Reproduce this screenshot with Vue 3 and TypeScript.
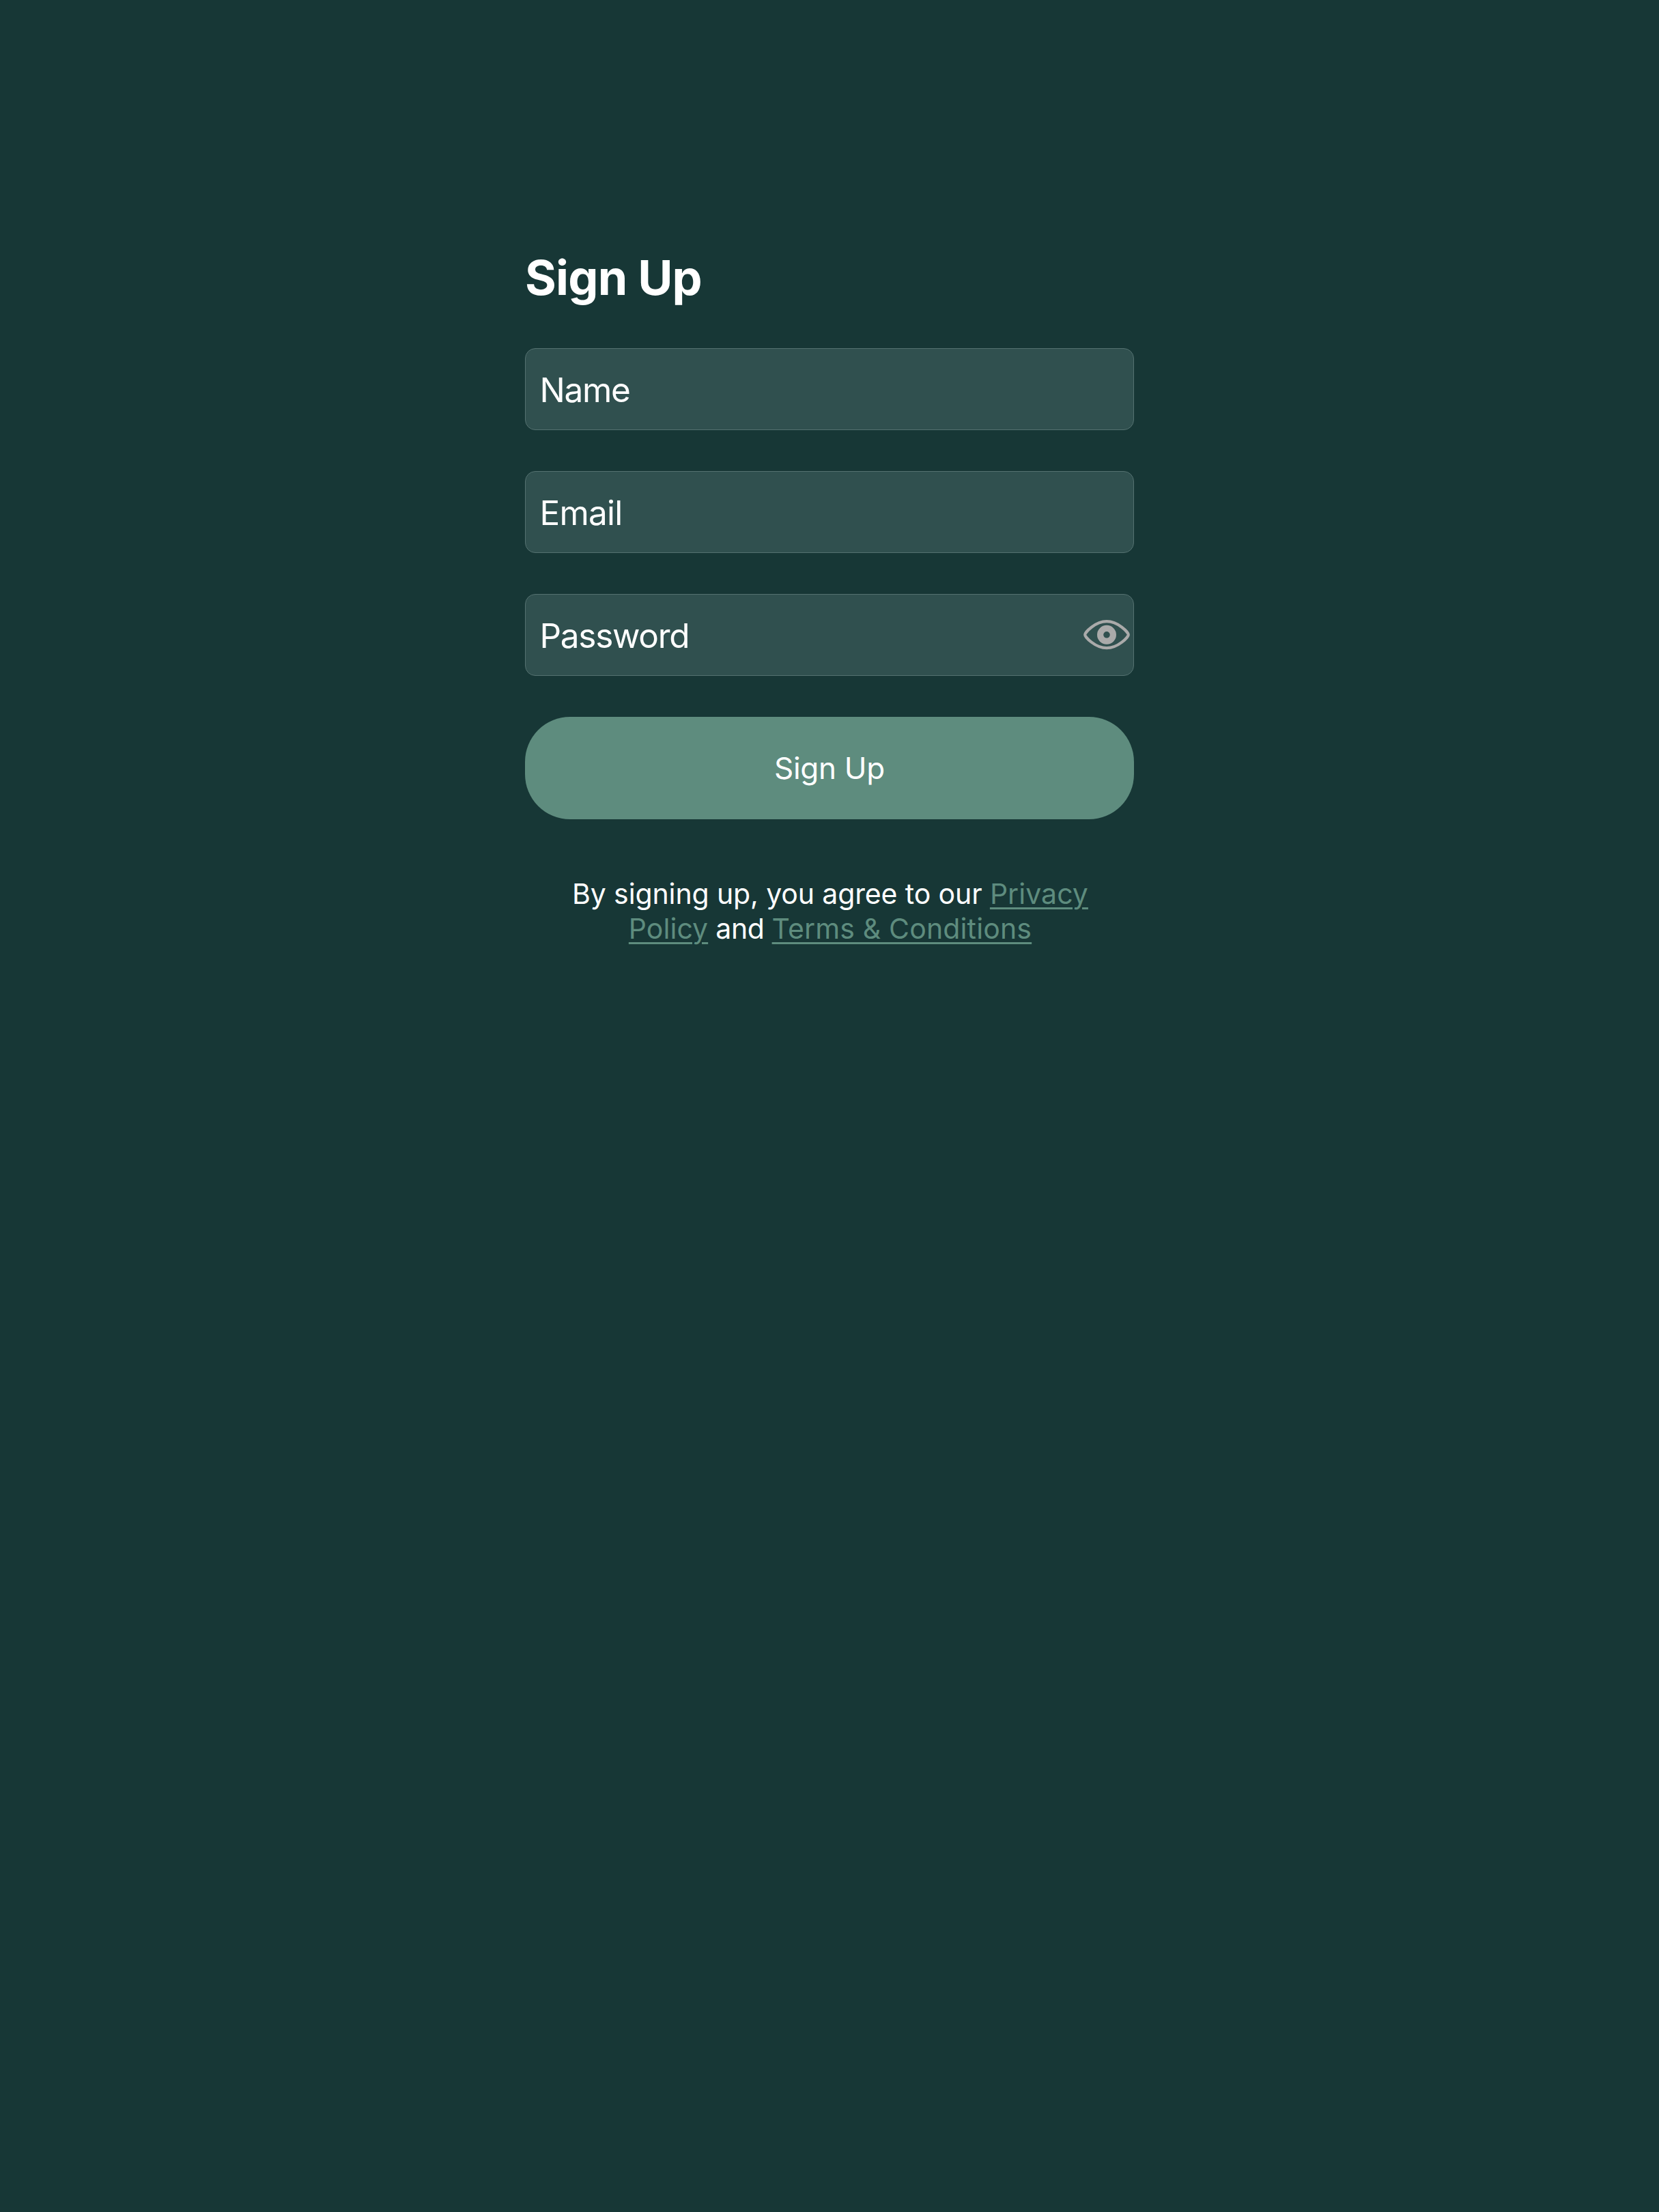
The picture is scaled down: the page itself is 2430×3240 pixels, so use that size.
<script setup lang="ts">
interface Field {
  key: string
  label: string
  reveal?: boolean
}

const fields: Field[] = [
  { key: 'name', label: 'Name' },
  { key: 'email', label: 'Email' },
  { key: 'password', label: 'Password', reveal: true },
]
</script>

<template>
  <main class="page">
    <form class="form" @submit.prevent>
      <h1 class="title">Sign Up</h1>
      <div v-for="field in fields" :key="field.key" class="field">
        <span class="label" :class="field.key">{{ field.label }}</span>
        <svg v-if="field.reveal" class="eye" viewBox="0 0 68 44" aria-hidden="true">
          <path
            d="M2.2 21.7C2.2 18.5 17 2.2 34 2.2S65.8 18.5 65.8 21.7S51 41.2 34 41.2S2.2 25 2.2 21.7Z"
            fill="none"
            stroke="currentColor"
            stroke-width="4.2"
            stroke-linejoin="round"
          />
          <circle cx="34" cy="21.8" r="9.4" fill="none" stroke="currentColor" stroke-width="9.2" />
        </svg>
      </div>
      <button class="submit" type="submit">Sign Up</button>
      <p class="terms">
        By signing up, you agree to our <a class="privacy">Privacy Policy</a><span class="and"> and </span><a class="conditions">Terms &amp; Conditions</a>
      </p>
    </form>
  </main>
</template>

<style>
body {
  margin: 0;
  background: #173736;
}
</style>

<style scoped>
.page {
  min-height: 3240px;
  box-sizing: border-box;
  padding-top: 364px;
  padding-left: 769px;
  background: #173736;
  color: #fff;
  font-family: Inter, 'Liberation Sans', sans-serif;
}

.form {
  width: 892px;
}

.title {
  margin: 0 0 61px;
  font-size: 70px;
  font-weight: 700;
  line-height: 85px;
  letter-spacing: -0.8px;
}

.field {
  display: flex;
  align-items: center;
  justify-content: space-between;
  box-sizing: border-box;
  height: 120px;
  margin-bottom: 60px;
  padding: 0 5px 0 20.5px;
  border: 1px solid #547170;
  border-radius: 15px;
  background: #30504f;
}

.label {
  padding-top: 2px;
  font-size: 49.5px;
  line-height: 60px;
}

.name {
  letter-spacing: -1.3px;
}

.email {
  letter-spacing: -0.8px;
}

.password {
  letter-spacing: -1.3px;
}

.eye {
  width: 68px;
  height: 44px;
  color: #aaa;
}

.submit {
  display: block;
  width: 100%;
  height: 150px;
  padding: 0;
  border: 0;
  border-radius: 66px;
  background: #5e8c7e;
  color: #fff;
  font: 400 44px/54px Inter, 'Liberation Sans', sans-serif;
  letter-spacing: -0.3px;
}

.terms {
  margin: 84px 0 0;
  padding: 0 59px 0 61px;
  font-size: 41px;
  line-height: 51px;
  letter-spacing: -0.12px;
  text-align: center;
}

.terms a {
  color: #5e8c7e;
  text-decoration: underline;
  text-decoration-thickness: 3px;
  text-underline-offset: 5px;
}

.terms .privacy {
  letter-spacing: 0.04px;
}

.terms .and {
  letter-spacing: -0.4px;
}

.terms .conditions {
  letter-spacing: 0.15px;
}
</style>
